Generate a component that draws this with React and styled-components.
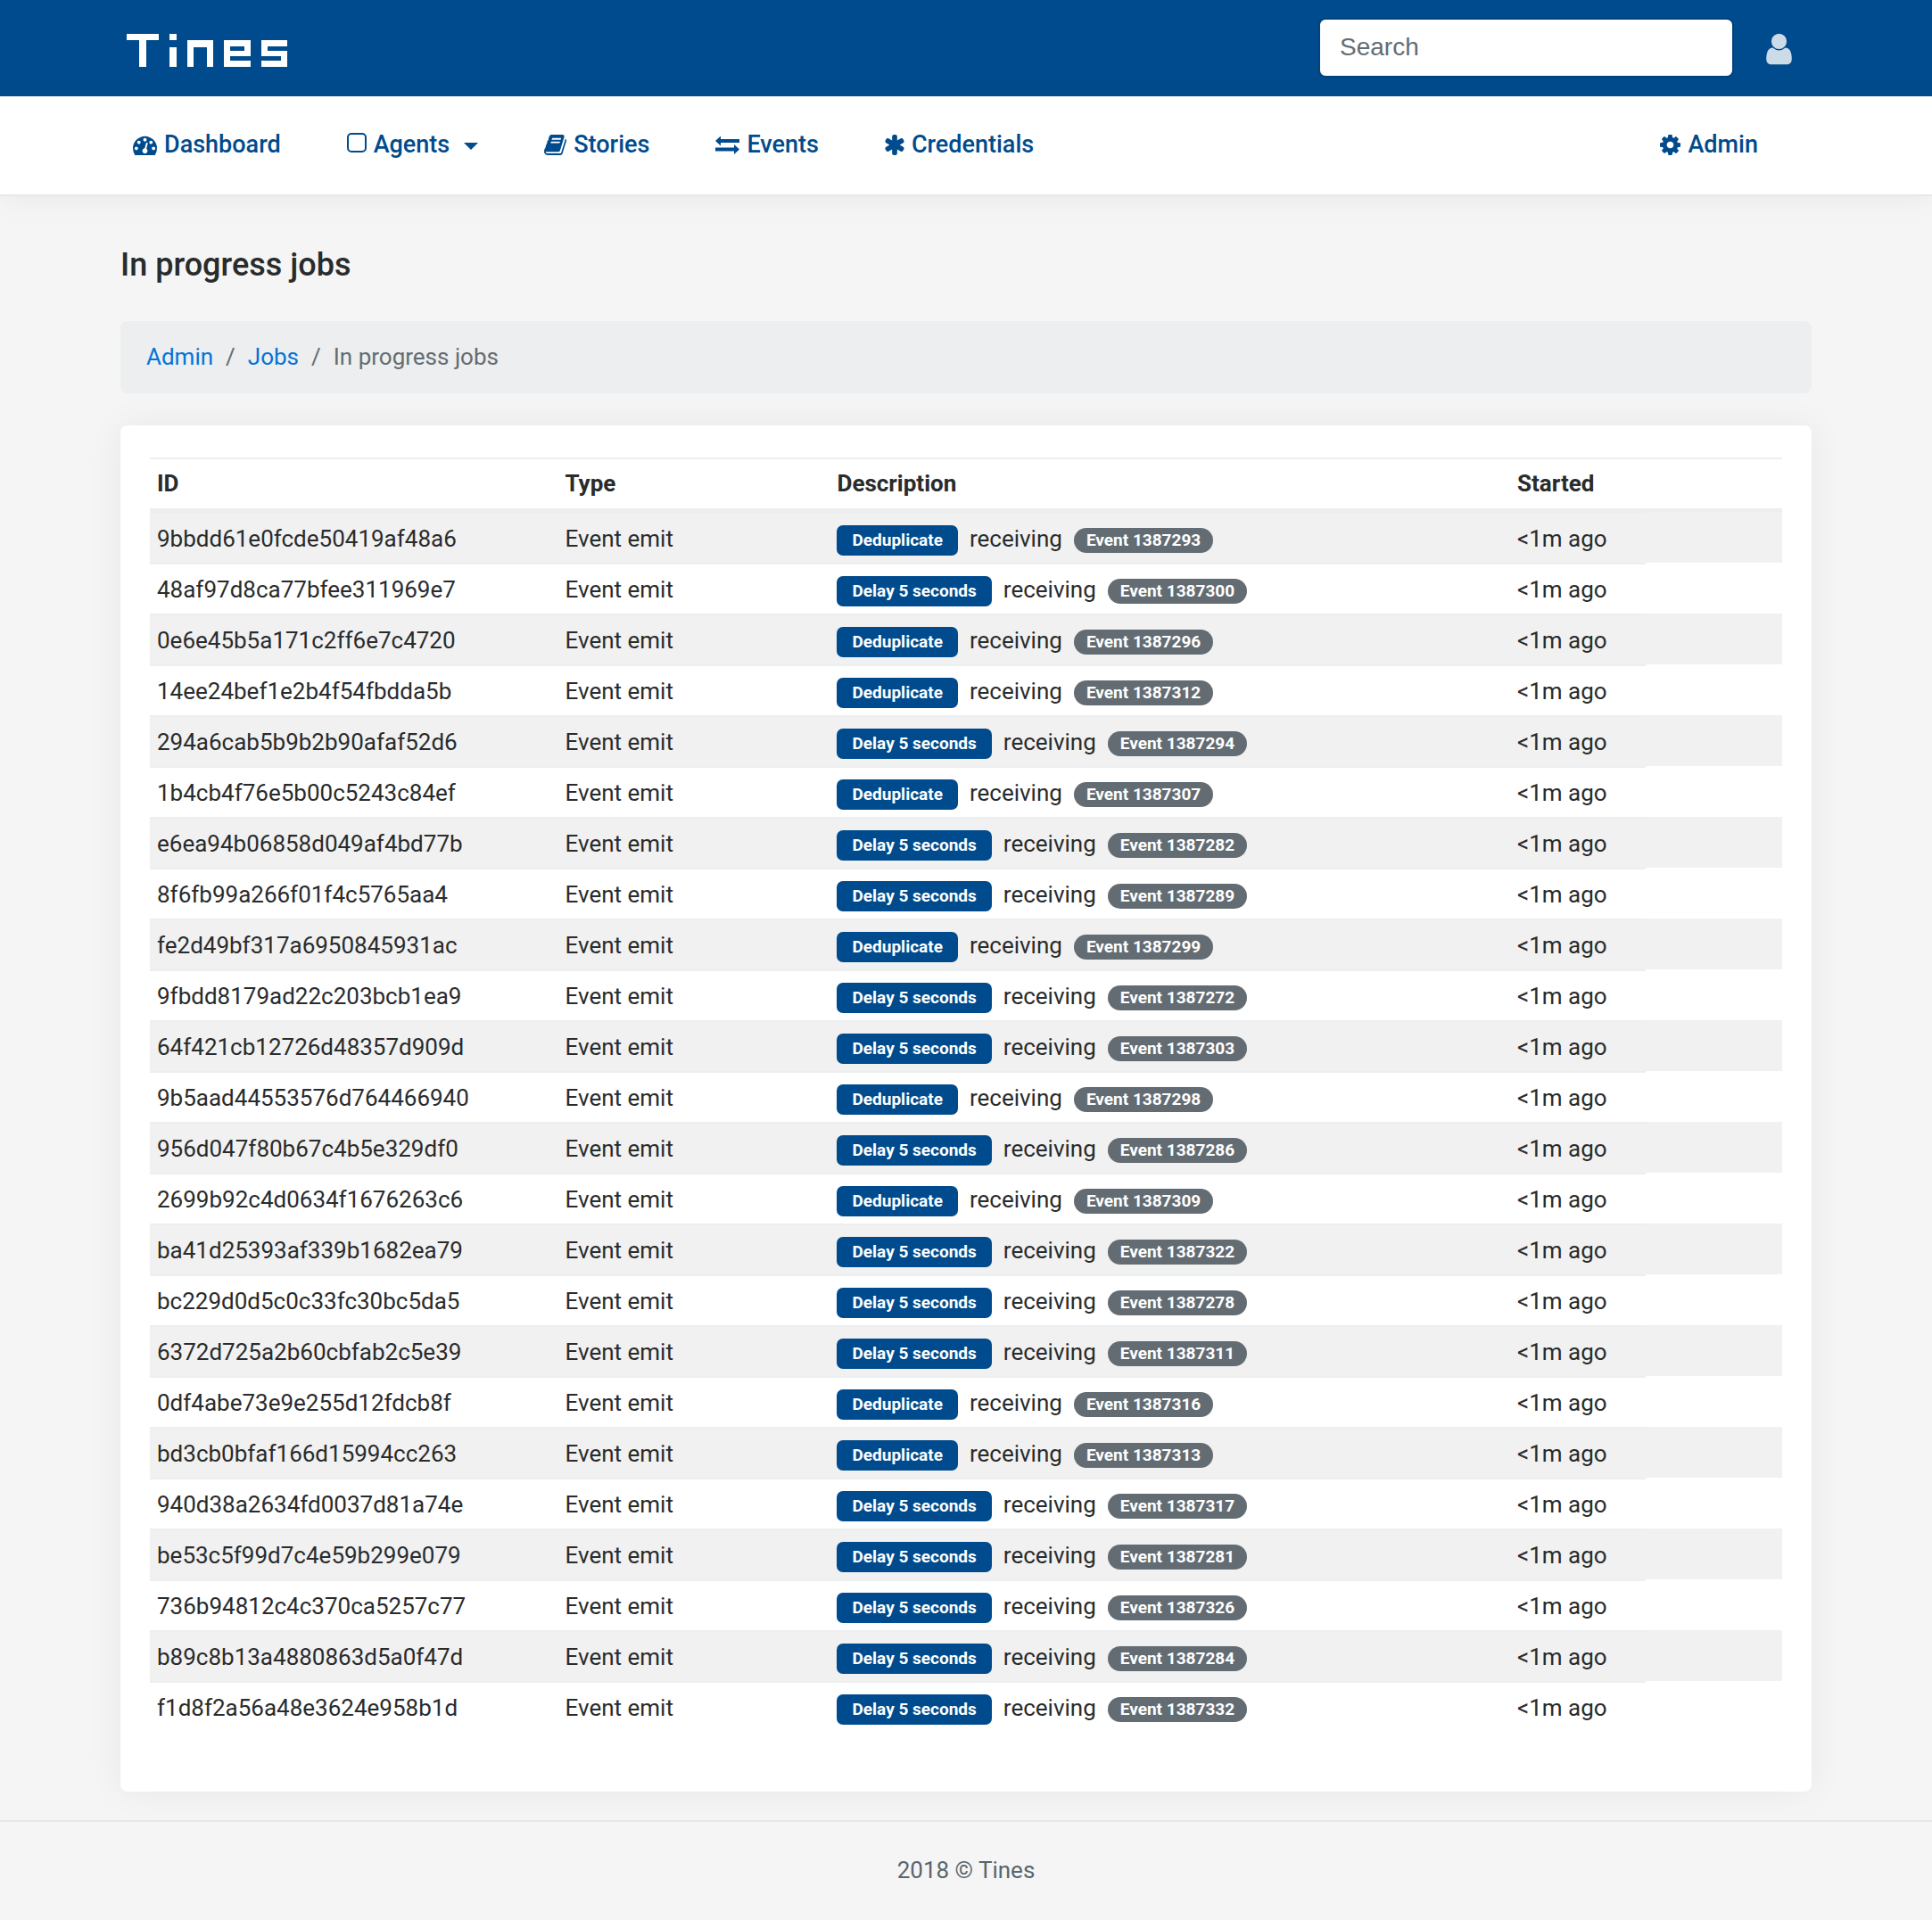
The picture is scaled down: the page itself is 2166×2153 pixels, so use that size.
import React from "react";
import styled, { createGlobalStyle } from "styled-components";

const blue = "#004b8d";

const GlobalStyle = createGlobalStyle`
  *, *::before, *::after { box-sizing: border-box; }
  body {
    margin: 0;
    background: #f5f5f5;
    color: #292b2c;
    font: 400 26px/39px Roboto, "Open Sans", sans-serif;
  }
  a { text-decoration: none; }
`;

const Container = styled.div`
  max-width: 1896px;
  margin: 0 auto;
`;

const TopBar = styled.header`
  background: ${blue};
`;

const TopBarInner = styled(Container)`
  display: flex;
  align-items: center;
  justify-content: space-between;
  height: 108px;
  padding: 0 22px 1px 7px;
`;

const LogoLink = styled.a`
  display: flex;
  padding-top: 5px;
  color: #fff;
`;

const Tools = styled.div`
  display: flex;
  align-items: center;
  gap: 36px;
`;

const SearchInput = styled.input`
  width: 466px;
  height: 67px;
  padding: 0 22px 2px;
  border: 2px solid #00427c;
  border-radius: 8px;
  background: #fff;
  color: #464a4c;
  font: 28px "Liberation Sans", Arial, sans-serif;
  &::placeholder { color: #636c72; opacity: 1; }
`;

const UserButton = styled.button`
  display: flex;
  padding: 2px 0 0;
  border: 0;
  background: none;
  color: rgba(255, 255, 255, 0.8);
`;

const NavBar = styled.nav`
  background: #fff;
  border-bottom: 2px solid #e8e8e8;
  box-shadow: 0 2px 30px rgba(0, 0, 0, 0.06);
`;

const NavList = styled(Container).attrs({ as: "ul" })`
  display: flex;
  align-items: center;
  gap: 74px;
  height: 110px;
  padding: 0 60px 2px 14px;
  list-style: none;
`;

const NavItem = styled.li`
  margin-left: ${(p) => (p.$end ? "auto" : "0")};
`;

const NavLink = styled.a`
  display: flex;
  align-items: center;
  gap: 8px;
  color: ${blue};
  font-weight: 500;
  font-size: 27px;
  line-height: 40px;
`;

const Caret = styled.span`
  margin: 4px 0 0 8px;
  border: 8px solid transparent;
  border-top-color: ${blue};
  border-bottom: 0;
`;

const Square = styled.span`
  width: 22px;
  height: 22px;
  margin-bottom: 4px;
  border: 2px solid ${blue};
  border-radius: 5px;
`;

const PageTitle = styled.h1`
  margin: 56px 0 42px;
  font-size: 36px;
  line-height: 42px;
  font-weight: 500;
`;

const Breadcrumb = styled.ol`
  display: flex;
  margin: 0 0 36px;
  padding: 21px 29px;
  border-radius: 8px;
  background: #eceeef;
  color: #636c72;
  list-style: none;
`;

const Crumb = styled.li`
  & + &::before {
    content: "/";
    padding: 0 14px;
  }
`;

const CrumbLink = styled.a`
  color: #0275d8;
`;

const Card = styled.section`
  margin-bottom: 32px;
  padding: 36px 33px 67px;
  border-radius: 8px;
  background: #fff;
  box-shadow: 0 0 40px rgba(0, 0, 0, 0.06);
`;

const Table = styled.table`
  width: 100%;
  table-layout: fixed;
  border-collapse: separate;
  border-spacing: 0;
`;

const Col = styled.col`
  width: calc(100% * ${(p) => p.$span} / 12);
`;

const Th = styled.th`
  padding: 8px;
  border-top: 2px solid #eceeef;
  border-bottom: 4px solid #eceeef;
  text-align: left;
  font-weight: 700;
`;

const Row = styled.tr`
  &:nth-child(odd) { background: #f1f1f1; }
`;

const Td = styled.td`
  height: 57px;
  padding: 2px 8px 0;
  border-top: 2px solid #eceeef;
  white-space: nowrap;
`;

const EmptyTd = styled(Td)`
  border-top: 0;
`;

const Description = styled.div`
  display: flex;
  align-items: center;
  gap: 13px;
`;

const AgentLabel = styled.a`
  margin-top: 2px;
  padding: 0 17px;
  border-radius: 7px;
  background: ${blue};
  color: #fff;
  font-weight: 700;
  font-size: 19px;
  line-height: 34px;
`;

const EventPill = styled.a`
  margin-top: 2px;
  padding: 0 14px;
  border-radius: 14px;
  background: #636c72;
  color: #fff;
  font-weight: 700;
  font-size: 19px;
  line-height: 28px;
`;

const Footer = styled.footer`
  padding: 35px 0 36px;
  border-top: 2px solid #e7e7e7;
  color: #58666e;
  text-align: center;
`;

const paths = {
  user: "M1536 1399q0 109-62.5 187t-150.5 78h-854q-88 0-150.5-78t-62.5-187q0-85 8.5-160.5t31.5-152 58.5-131 94-89 134.5-34.5q131 128 313 128t313-128q76 0 134.5 34.5t94 89 58.5 131 31.5 152 8.5 160.5zm-256-887q0 159-112.5 271.5t-271.5 112.5-271.5-112.5-112.5-271.5 112.5-271.5 271.5-112.5 271.5 112.5 112.5 271.5z",
  dashboard: "M384 1152q0-53-37.5-90.5t-90.5-37.5-90.5 37.5-37.5 90.5 37.5 90.5 90.5 37.5 90.5-37.5 37.5-90.5zm192-448q0-53-37.5-90.5t-90.5-37.5-90.5 37.5-37.5 90.5 37.5 90.5 90.5 37.5 90.5-37.5 37.5-90.5zm428 481l101-382q6-26-7.5-48.5t-38.5-29.5-48 6.5-30 39.5l-101 382q-60 5-107 43.5t-63 98.5q-20 77 20 146t117 89 146-20 89-117q16-60-6-117t-72-91zm660-33q0-53-37.5-90.5t-90.5-37.5-90.5 37.5-37.5 90.5 37.5 90.5 90.5 37.5 90.5-37.5 37.5-90.5zm-640-640q0-53-37.5-90.5t-90.5-37.5-90.5 37.5-37.5 90.5 37.5 90.5 90.5 37.5 90.5-37.5 37.5-90.5zm448 192q0-53-37.5-90.5t-90.5-37.5-90.5 37.5-37.5 90.5 37.5 90.5 90.5 37.5 90.5-37.5 37.5-90.5zm320 448q0 261-141 483-19 29-54 29h-1402q-35 0-54-29-141-221-141-483 0-182 71-348t191-286 286-191 348-71 348 71 286 191 191 286 71 348z",
  book: "M1703 478q40 57 18 129l-275 906q-19 64-76.5 107.5t-122.5 43.5h-923q-77 0-148.5-53.5t-99.5-131.5q-24-67-2-127 0-4 3-27t4-37q1-8-3-21.5t-3-19.5q2-11 8-21t16.5-23.5 16.5-23.5q23-38 45-91.5t30-91.5q3-10 .5-30t-.5-28q3-11 17-28t17-23q21-36 42-92t25-90q1-9-2.5-32t.5-28q4-13 22-30.5t22-22.5q19-26 42.5-84.5t27.5-96.5q1-8-3-25.5t-2-26.5q2-8 9-18t18-23 17-21q8-12 16.5-30.5t15-35 16-36 19.5-32 26.5-23.5 36-11.5 47.5 5.5l-1 3q38-9 51-9h761q74 0 114 56t18 130l-274 906q-36 119-71.5 153.5t-128.5 34.5h-869q-27 0-38 15-11 16-1 43 24 70 144 70h923q29 0 56-15.5t35-41.5l300-987q7-22 5-57 38 15 59 43zm-1064 2q-4 13 2 22.5t20 9.5h608q13 0 25.5-9.5t16.5-22.5l21-64q4-13-2-22.5t-20-9.5h-608q-13 0-25.5 9.5t-16.5 22.5zm-83 256q-4 13 2 22.5t20 9.5h608q13 0 25.5-9.5t16.5-22.5l21-64q4-13-2-22.5t-20-9.5h-608q-13 0-25.5 9.5t-16.5 22.5z",
  asterisk: "M1546 1050q46 26 59.5 77.5t-12.5 97.5l-64 110q-26 46-77.5 59.5t-97.5-12.5l-266-153v307q0 52-38 90t-90 38h-128q-52 0-90-38t-38-90v-307l-266 153q-46 26-97.5 12.5t-77.5-59.5l-64-110q-26-46-12.5-97.5t59.5-77.5l266-154-266-154q-46-26-59.5-77.5t12.5-97.5l64-110q26-46 77.5-59.5t97.5 12.5l266 153v-307q0-52 38-90t90-38h128q52 0 90 38t38 90v307l266-153q46-26 97.5-12.5t77.5 59.5l64 110q26 46 12.5 97.5t-59.5 77.5l-266 154z",
  cog: "M1152 896q0-106-75-181t-181-75-181 75-75 181 75 181 181 75 181-75 75-181zm512-109v222q0 12-8 23t-20 13l-185 28q-19 54-39 91 35 50 107 138 10 12 10 25t-9 23q-27 37-99 108t-94 71q-12 0-26-9l-138-108q-44 23-91 38-16 136-29 186-7 28-36 28h-222q-14 0-24.5-8.5t-11.5-21.5l-28-184q-49-16-90-37l-141 107q-10 9-25 9-14 0-25-11-126-114-165-168-7-10-7-23 0-12 8-23 15-21 51-66.5t54-70.5q-27-50-41-99l-183-27q-13-2-21-12.5t-8-23.5v-222q0-12 8-23t19-13l186-28q14-46 39-92-40-57-107-138-10-12-10-24 0-10 9-23 26-36 98.5-107.5t94.5-71.5q13 0 26 10l138 107q44-23 91-38 16-136 29-186 7-28 36-28h222q14 0 24.5 8.5t11.5 21.5l28 184q49 16 90 37l142-107q9-9 24-9 13 0 25 10 129 119 165 170 7 8 7 22 0 12-8 23-15 21-51 66.5t-54 70.5q26 50 41 98l183 28q13 2 21 12.5t8 23.5z",
  exchange: "M0 9L6 3.5V7H27V11H6V14.5ZM27 18.5L21 13V16.5H0V20.5H21V24Z",
};

const boxes = {
  user: "256 0 1280 1792",
  dashboard: "0 0 1792 1792",
  book: "64 0 1664 1792",
  asterisk: "154 0 1484 1792",
  cog: "128 0 1536 1792",
  exchange: "0 0 27 27",
};

function Icon({ name, size = 27 }) {
  const [, , w, h] = boxes[name].split(" ").map(Number);
  return (
    <svg width={Math.round((size * w) / h)} height={size} viewBox={boxes[name]} fill="currentColor" aria-hidden="true">
      <path d={paths[name]} />
    </svg>
  );
}

function Logo() {
  return (
    <svg width="180" height="37" viewBox="0 0 180 37" fill="currentColor" role="img" aria-label="Tines">
      <path d="M0 0H36V7H22V37H14V7H0Z" />
      <path d="M48 0H56V7H48ZM48 15H56V37H48Z" />
      <path d="M68 7H97V37H90V15H75V37H68Z" />
      <path fillRule="evenodd" d="M109 7H139V25H116V30H139V37H109ZM116 14V19H132V14Z" />
      <path d="M151 7H180V14H158V19H180V37H151V30H173V25H151Z" />
    </svg>
  );
}

const D = "Deduplicate";
const S = "Delay 5 seconds";
const jobs = [
  ["9bbdd61e0fcde50419af48a6", D, 1387293],
  ["48af97d8ca77bfee311969e7", S, 1387300],
  ["0e6e45b5a171c2ff6e7c4720", D, 1387296],
  ["14ee24bef1e2b4f54fbdda5b", D, 1387312],
  ["294a6cab5b9b2b90afaf52d6", S, 1387294],
  ["1b4cb4f76e5b00c5243c84ef", D, 1387307],
  ["e6ea94b06858d049af4bd77b", S, 1387282],
  ["8f6fb99a266f01f4c5765aa4", S, 1387289],
  ["fe2d49bf317a6950845931ac", D, 1387299],
  ["9fbdd8179ad22c203bcb1ea9", S, 1387272],
  ["64f421cb12726d48357d909d", S, 1387303],
  ["9b5aad44553576d764466940", D, 1387298],
  ["956d047f80b67c4b5e329df0", S, 1387286],
  ["2699b92c4d0634f1676263c6", D, 1387309],
  ["ba41d25393af339b1682ea79", S, 1387322],
  ["bc229d0d5c0c33fc30bc5da5", S, 1387278],
  ["6372d725a2b60cbfab2c5e39", S, 1387311],
  ["0df4abe73e9e255d12fdcb8f", D, 1387316],
  ["bd3cb0bfaf166d15994cc263", D, 1387313],
  ["940d38a2634fd0037d81a74e", S, 1387317],
  ["be53c5f99d7c4e59b299e079", S, 1387281],
  ["736b94812c4c370ca5257c77", S, 1387326],
  ["b89c8b13a4880863d5a0f47d", S, 1387284],
  ["f1d8f2a56a48e3624e958b1d", S, 1387332],
];

export default function App() {
  return (
    <>
      <GlobalStyle />
      <TopBar>
        <TopBarInner>
          <LogoLink href="#"><Logo /></LogoLink>
          <Tools>
            <SearchInput type="search" placeholder="Search" aria-label="Search" />
            <UserButton type="button" aria-label="Account"><Icon name="user" size={40} /></UserButton>
          </Tools>
        </TopBarInner>
      </TopBar>
      <NavBar>
        <NavList>
          <NavItem><NavLink href="#"><Icon name="dashboard" />Dashboard</NavLink></NavItem>
          <NavItem><NavLink href="#"><Square />Agents<Caret /></NavLink></NavItem>
          <NavItem><NavLink href="#"><Icon name="book" />Stories</NavLink></NavItem>
          <NavItem><NavLink href="#"><Icon name="exchange" />Events</NavLink></NavItem>
          <NavItem><NavLink href="#"><Icon name="asterisk" />Credentials</NavLink></NavItem>
          <NavItem $end><NavLink href="#"><Icon name="cog" />Admin</NavLink></NavItem>
        </NavList>
      </NavBar>
      <Container as="main">
        <PageTitle>In progress jobs</PageTitle>
        <Breadcrumb>
          <Crumb><CrumbLink href="#">Admin</CrumbLink></Crumb>
          <Crumb><CrumbLink href="#">Jobs</CrumbLink></Crumb>
          <Crumb>In progress jobs</Crumb>
        </Breadcrumb>
        <Card>
          <Table>
            <colgroup>
              <Col $span={3} /><Col $span={2} /><Col $span={5} /><Col $span={1} /><Col $span={1} />
            </colgroup>
            <thead>
              <tr><Th>ID</Th><Th>Type</Th><Th>Description</Th><Th>Started</Th><Th /></tr>
            </thead>
            <tbody>
              {jobs.map(([id, agent, event]) => (
                <Row key={id}>
                  <Td>{id}</Td>
                  <Td>Event emit</Td>
                  <Td>
                    <Description>
                      <AgentLabel href="#">{agent}</AgentLabel>
                      <span>receiving</span>
                      <EventPill href="#">Event {event}</EventPill>
                    </Description>
                  </Td>
                  <Td>&lt;1m ago</Td>
                  <EmptyTd />
                </Row>
              ))}
            </tbody>
          </Table>
        </Card>
      </Container>
      <Footer>2018 © Tines</Footer>
    </>
  );
}
